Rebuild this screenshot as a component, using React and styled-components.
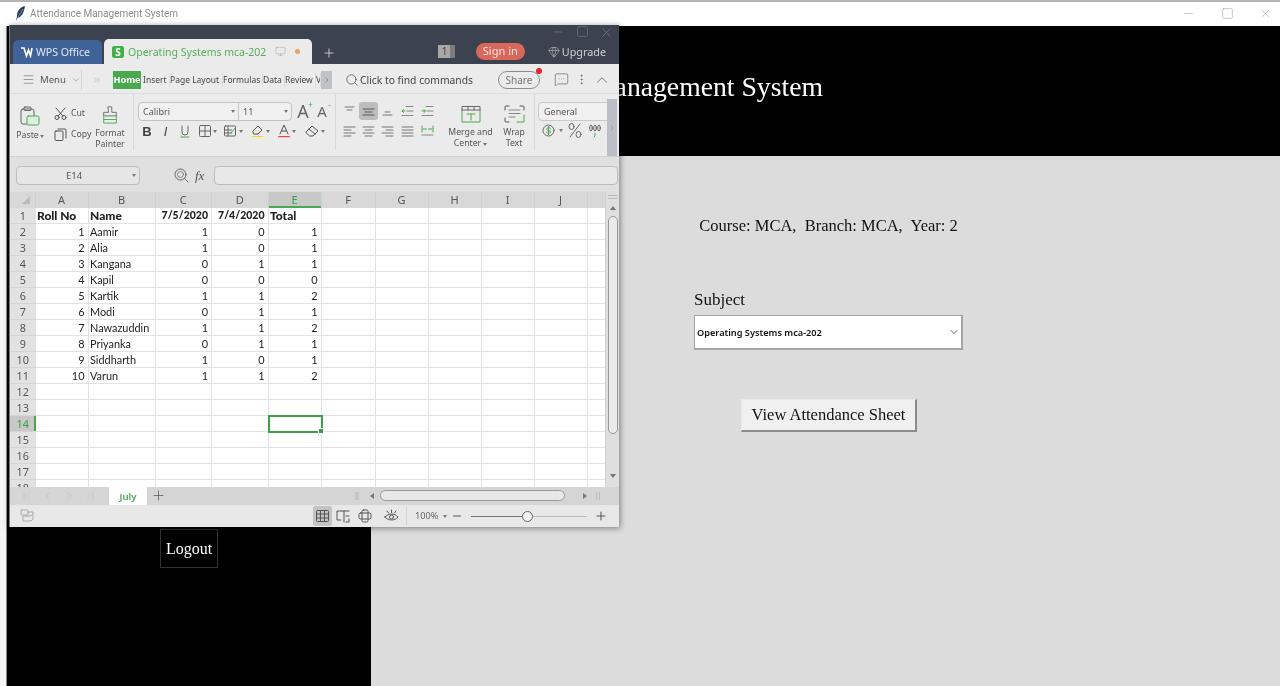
import React from "react";
import styled, { createGlobalStyle } from "styled-components";
import { Menu as MenuIcon, ChevronDown, ChevronsRight, ChevronRight, ChevronLeft, ChevronUp, Search, Plus, Minus, Monitor, Gem, MessageSquareMore, EllipsisVertical, X, Square, ChevronFirst, ChevronLast } from "lucide-react";

const UI = '"Noto Sans", "Open Sans", sans-serif';
const SERIF = '"Liberation Serif", serif';

const Global = createGlobalStyle`
  html, body { margin: 0; padding: 0; background: #fff; overflow: hidden; }
  * { box-sizing: border-box; }
`;

const Frame = styled.div`
  position: relative; width: 1280px; height: 686px; overflow: hidden;
  display: flex; flex-direction: column; background: #f6f6f6; filter: blur(0.35px);
`;
const TitleBar = styled.div`
  height: 26px; flex: none; display: flex; align-items: center; background: #fff;
  border-top: 2px solid #b5b5b5; padding: 0 8px 1px 15px;
  font: 10px Roboto, sans-serif; color: #8b8b8b;
`;
const TitleText = styled.span` margin-left: 4px; flex: 1; `;
const WinBtn = styled.span`
  width: 13px; margin-left: 25.5px; display: flex; justify-content: center; color: #9a9a9a;
`;
const Content = styled.div` flex: 1; display: flex; min-height: 0; `;
const LeftEdge = styled.div` width: 7px; flex: none; background: #f5f5f5; border-right: 1px solid #8c8c8c; `;
const Column = styled.div` flex: 1; display: flex; flex-direction: column; `;
const Header = styled.header`
  height: 130px; flex: none; background: #000; color: #fff; display: flex; align-items: center; justify-content: center;
  padding: 0 7px 8px 0; font: 27.7px ${SERIF};
`;
const Body = styled.div` flex: 1; display: flex; `;
const Sidebar = styled.nav`
  width: 364px; flex: none; background: #000; display: flex; flex-direction: column; align-items: center; padding-top: 373px;
`;
const LogoutButton = styled.button`
  width: 58px; height: 39px; padding: 0; background: #000; color: #fff; border: 1px solid #333;
  font: 16px ${SERIF};
`;
const Main = styled.main`
  flex: 1; background: #dcdcdc; padding: 59px 0 0 323px; display: flex; flex-direction: column; align-items: flex-start; color: #111;
`;
const CourseLine = styled.div` width: 269px; text-align: center; font: 16.5px/21px ${SERIF}; white-space: pre; `;
const SubjectLabel = styled.label` margin-top: 54px; font: 17px/20px ${SERIF}; `;
const SelectWrap = styled.div`
  position: relative; margin-top: 5px; width: 269px; height: 35px;
`;
const SubjectSelect = styled.select`
  appearance: none; width: 100%; height: 100%; background: #fff; border: 1px solid #a5a5a5; border-width: 1px 2px 2px 1px;
  padding: 0 0 0 2px; font: 600 9.2px ${UI}; color: #111; border-radius: 0; outline: none;
`;
const SelectChevron = styled.span`
  position: absolute; right: 3px; top: 11px; color: #666; display: flex; pointer-events: none;
`;
const ViewButton = styled.button`
  margin: 49px 0 0 47px; width: 176px; height: 33px; padding: 0; background: #f0f0f0; color: #111;
  border: 1px solid #e8e8e8; border-right: 2px solid #8c8c8c; border-bottom: 2px solid #8c8c8c; font: 16.5px ${SERIF};
`;

/* spreadsheet window */
const Wps = styled.section`
  position: absolute; left: 9px; top: 25px; width: 610px; height: 502px; display: flex; flex-direction: column;
  background: #ebebeb; box-shadow: 1px 1px 6px rgba(0,0,0,.45); border-left: 1px solid #777; overflow: hidden;
  font-family: ${UI}; color: #444;
`;
const WpsTop = styled.div`
  height: 39px; flex: none; background: #3d4250; display: flex; align-items: flex-end; padding-left: 3px; position: relative; color: #d4d4d4;
`;
const WpsControls = styled.div`
  position: absolute; right: 5px; top: 0; display: flex; gap: 10.5px; color: #7f8591;
`;
const BrandTab = styled.div`
  width: 89px; height: 24px; background: #3f6298; border-radius: 5px 5px 0 0; color: #dfe6f0; font-size: 10.6px;
  display: flex; align-items: center; justify-content: center; gap: 3px; padding-right: 5px;
`;
const DocTab = styled.div`
  margin-left: 2px; width: 208px; height: 25px; background: #ebebeb; border-radius: 5px 5px 0 0; display: flex; align-items: center; padding-left: 8px;
  color: #55b05b; font-size: 10.5px;
`;
const DocIcon = styled.span`
  width: 12px; height: 12px; background: #44b04c; border-radius: 2px; color: #fff; font: bold 10px/12px ${UI}; text-align: center; margin-right: 4px; flex: none;
`;
const DocName = styled.span` width: 147px; white-space: nowrap; `;
const Dot = styled.span` width: 5px; height: 5px; border-radius: 50%; background: #e9a05a; margin-left: 9px; `;
const AddTab = styled.span` margin: 0 0 4px 10px; display: flex; color: #ccc; `;
const TopRight = styled.div`
  margin-left: auto; padding-right: 13px; height: 39px; display: flex; align-items: center; padding-top: 14px;
`;
const CountBox = styled.span`
  width: 17px; height: 13px; background: linear-gradient(90deg,#a8a8a8 70%,#7d7d7d 70%); color: #444; font-size: 10px; line-height: 13px; padding-left: 4px;
`;
const SignIn = styled.span`
  margin-left: 21px; width: 49px; height: 17px; border-radius: 9px; background: #d9675b; color: #f6e6e2; font-size: 11px; line-height: 16px; text-align: center;
`;
const Upgrade = styled.span`
  margin-left: 23px; display: flex; align-items: center; gap: 2px; font-size: 10.8px; color: #cfcfcf;
`;

const CmdRow = styled.div`
  height: 30px; flex: none; display: flex; align-items: center; border-bottom: 1px solid #dedede; padding: 2px 0 0 12px; font-size: 8.5px; color: #444;
`;
const MenuBtn = styled.span`
  display: flex; align-items: center; gap: 5px; width: 60px; height: 20px; border-right: 1px solid #d5d5d5; color: #555; font-size: 9.6px; flex: none;
`;
const More = styled.span` display: flex; margin: 0 11px 0 10px; color: #888; flex: none; `;
const HomeTab = styled.span`
  width: 28px; height: 18px; background: #4aa94f; color: #fff; font-weight: 700; font-size: 9.2px; line-height: 18px; text-align: center; margin-right: 2px; flex: none;
`;
const NavTab = styled.span`
  width: ${p => p.$w}px; flex: none; line-height: 14px; border-right: 1px solid #dadada; white-space: nowrap; overflow: hidden;
`;
const TabScroll = styled.span`
  width: 11px; height: 18px; background: #bfc2c9; color: #777; display: flex; align-items: center; justify-content: center; flex: none;
`;
const FindBox = styled.span`
  margin-left: 13px; display: flex; align-items: center; gap: 1px; font-size: 10.3px; color: #444; width: 140px; white-space: nowrap; flex: none;
`;
const SharePill = styled.span`
  position: relative; margin-left: 13px; width: 42px; height: 18px; border: 1px solid #8d8d8d; border-radius: 9px; text-align: center; font-size: 10px; line-height: 16px; color: #777; flex: none;
  &::after { content: ""; position: absolute; right: -3px; top: -4px; width: 6px; height: 6px; border-radius: 50%; background: #e8202a; }
`;
const CmdIcon = styled.span` display: flex; margin-left: ${p => p.$ml}px; color: #555; flex: none; `;

const Ribbon = styled.div`
  height: 63px; flex: none; display: flex; border-bottom: 1px solid #d2d2d2; font-size: 8.7px; color: #555; overflow: hidden;
`;
const Group = styled.div`
  width: ${p => p.$w}px; flex: none; display: flex; ${p => p.$sep && "border-right: 1px solid #d8d8d8;"}
  margin-bottom: 6px; padding-left: ${p => p.$pl || 0}px;
`;
const TallBtn = styled.div`
  width: ${p => p.$w}px; flex: none; display: flex; flex-direction: column; align-items: center; padding-top: ${p => p.$pt || 11}px; line-height: 11px; text-align: center;
`;
const TallLabel = styled.span` margin-top: ${p => p.$mt || 3}px; white-space: nowrap; `;
const SmallStack = styled.div`
  width: 38px; margin-left: 11px; flex: none; display: flex; flex-direction: column; gap: 9px; padding-top: 13px;
`;
const SmallBtn = styled.span` display: flex; align-items: center; gap: 4px; height: 12px; `;
const ToolStack = styled.div` display: flex; flex-direction: column; padding-top: 8px; `;
const Combo = styled.div`
  width: 154px; height: 19px; border: 1px solid #c2c2c2; border-radius: 4px; background: #f0f0f0; display: flex; font-size: 9px; color: #555;
`;
const ComboPart = styled.span`
  width: ${p => p.$w}px; display: flex; align-items: center; justify-content: space-between; padding: 0 3px 0 4px; ${p => p.$sep && "border-right: 1px solid #c6c6c6;"}
`;
const Caret = styled.span`
  display: inline-block; width: 0; height: 0; border: 2.5px solid transparent; border-top: 3px solid #777; border-bottom: 0; margin-left: ${p => p.$ml || 0}px; flex: none;
`;
const ToolRow = styled.div` display: flex; margin-top: ${p => p.$mt || 0}px; height: ${p => p.$h || 18}px; `;
const ToolCell = styled.span`
  width: ${p => p.$w}px; height: 100%; flex: none; display: flex; align-items: center; justify-content: center; color: #666;
  ${p => p.$on && "background: #bdbdbd; border-radius: 3px;"}
`;
const BoldGlyph = styled.span`
  font: ${p => p.$i ? "italic 400" : "700"} 13px "Liberation Sans", sans-serif; color: #444;
`;
const FontA = styled.span`
  position: relative; font: ${p => p.$s}px/15px ${UI}; color: #666;
  &::after { content: "${p => p.$mark}"; position: absolute; right: -4px; top: -3px; font-size: 8px; line-height: 8px; color: #4aa94f; }
`;
const GeneralBox = styled.div`
  width: 75px; height: 19px; margin-left: 3px; border: 1px solid #c9c9c9; border-radius: 4px; background: #f0f0f0; font-size: 9px; line-height: 17px; padding-left: 5px;
`;
const NumRow = styled.div` display: flex; align-items: center; margin: 2px 0 0 3px; `;
const RibbonEdge = styled.div`
  margin: 5px 0 0 -1px; width: 10px; flex: none; background: #bbbec6; color: #888; display: flex; align-items: center; justify-content: center;
`;

const FormulaBar = styled.div`
  height: 35px; flex: none; background: #e0e0e0; display: flex; align-items: center; padding: 2px 0 0 6px;
`;
const NameBox = styled.div`
  width: 124px; height: 19px; background: #e6e6e6; border: 1px solid #bdbdbd; border-radius: 4px; display: flex; align-items: center; font-size: 9.5px; color: #555; padding: 0 3px 0 0;
`;
const NameText = styled.span` flex: 1; text-align: center; padding-right: 1px; `;
const FxIcons = styled.div` margin-left: 34px; display: flex; align-items: center; width: 40px; gap: 6px; color: #666; flex: none; `;
const FxGlyph = styled.span` font: italic 13px "Liberation Serif", serif; color: #555; `;
const FormulaInput = styled.div`
  width: 404px; height: 19px; background: #e8e8e8; border: 1px solid #bdbdbd; border-radius: 4px;
`;

const SheetArea = styled.div` flex: 1; min-height: 0; display: flex; background: #e0e0e0; `;
const GridWrap = styled.div` width: 595px; flex: none; display: flex; flex-direction: column; overflow: hidden; `;
const Grid = styled.div`
  display: grid; grid-template-columns: 25.5px 53px 67px 56.5px 56.5px 53px 54px 53px 53px 53px 53px 18.5px;
  grid-auto-rows: 16px; background: #fff; height: 295px; overflow: hidden; font: 10.9px/15px Lato, sans-serif; color: #222;
`;
const Corner = styled.div`
  background: #d8d8d8; display: flex; align-items: center; justify-content: center; border-right: 1px solid #cfcfcf;
  &::after { content: ""; width: 0; height: 0; border-left: 8px solid transparent; border-bottom: 8px solid #bbb; margin-left: 8px; }
`;
const ColHead = styled.div`
  background: ${p => p.$on ? "#c6c9c6" : "#d8d8d8"}; color: ${p => p.$on ? "#3e9a48" : "#555"}; text-align: center; font: 11px/16px ${UI};
  border-right: 1px solid #cfcfcf; ${p => p.$on ? "box-shadow: inset 0 -2px 0 #4aa94f;" : ""}
`;
const RowHead = styled.div`
  background: ${p => p.$on ? "#c6c9c6" : "#e2e2e2"}; color: #555; text-align: center; font: 10.8px/16px ${UI}; border-bottom: 1px solid #d4d4d4;
  ${p => p.$on ? "box-shadow: inset -2px 0 0 #4aa94f; color: #3e9a48;" : ""}
`;
const Cell = styled.div`
  position: relative; border-right: 1px solid #e2e2e2; border-bottom: 1px solid #e2e2e2; padding: 0 3px 0 1.5px; text-align: ${p => p.$r ? "right" : "left"};
  font-weight: ${p => p.$b ? 900 : 400}; font-size: ${p => p.$b ? (p.$r ? "10.5px" : "12px") : "10.9px"}; white-space: nowrap; overflow: visible;
  ${p => p.$sel && `
    outline: 2px solid #3f9f49; outline-offset: -1px; border: 0; z-index: 1;
    &::after { content: ""; position: absolute; right: -2px; bottom: -2px; width: 4px; height: 4px; background: #3f9f49; border: 1px solid #fff; }
  `}
`;
const VScroll = styled.div`
  flex: 1; display: flex; flex-direction: column; align-items: center; background: #dfdfdf; color: #777; border-left: 1px solid #d0d0d0;
`;
const VGrip = styled.span` width: 9px; height: 4px; margin-top: 3px; border: solid #bbb; border-width: 1px 0; flex: none; `;
const Arrow = styled.span`
  width: 0; height: 0; margin-top: ${p => p.$mt}px; flex: none; border: 3px solid transparent;
  ${p => p.$down ? "border-top: 4px solid #777; border-bottom: 0;" : "border-bottom: 4px solid #777; border-top: 0;"}
`;
const VThumb = styled.span` width: 10px; height: 218px; margin-top: 6px; background: #eaeaea; border: 1px solid #999; border-radius: 5px; flex: none; `;

const SheetTabs = styled.div`
  height: 18px; flex: none; background: #d5d5d5; display: flex; align-items: center; padding: 0 0 1px 10px; color: #bdbdbd; position: relative;
`;
const NavArrows = styled.span` display: flex; gap: 7px; width: 89px; `;
const JulyTab = styled.span`
  width: 38px; height: 18px; background: #fff; color: #46a64e; font: 600 9.6px/19px ${UI}; text-align: center; margin-bottom: -1px;
`;
const SheetAdd = styled.span` display: flex; margin-left: 4px; color: #555; `;
const HScroll = styled.div` margin-left: auto; display: flex; align-items: center; padding-right: 19px; color: #777; `;
const GripV = styled.span` width: 4px; height: 8px; background: #c5c5c5; `;
const HThumb = styled.span` width: 185px; height: 11px; background: #e8e8e8; border: 1px solid #999; border-radius: 6px; margin: 0 18px 0 6px; `;
const SideTri = styled.span`
  width: 0; height: 0; border: 3px solid transparent; margin-left: ${p => p.$ml || 0}px;
  ${p => p.$right ? "border-left: 4px solid #777; border-right: 0;" : "border-right: 4px solid #777; border-left: 0;"}
`;
const GripLine = styled.span` width: 4px; height: 8px; margin-left: 9px; border: solid #bbb; border-width: 0 1px; `;

const StatusBar = styled.div`
  height: 22px; flex: none; background: #e8e8e8; display: flex; align-items: center; padding-left: 10px; color: #777; font-size: 9.2px;
`;
const StatusGap = styled.span` flex: 1; `;
const ViewBtn = styled.span`
  width: ${p => p.$w || 22}px; height: 20px; display: flex; align-items: center; justify-content: center; color: #555;
  ${p => p.$on && "background: #c3c3c3; border-radius: 2px; width: 19px;"}
`;
const ZoomPct = styled.span`
  padding-left: 8px; border-left: 1px solid #d6d6d6; height: 18px; line-height: 18px; width: 45px; display: flex; align-items: center; gap: 5px; white-space: nowrap; color: #666;
`;
const Slider = styled.span`
  width: 116px; height: 1px; margin-left: 8px; background: linear-gradient(90deg,#777 48%,#bbb 48%); position: relative;
`;
const SliderKnob = styled.span`
  position: absolute; left: 51px; top: -5px; width: 11px; height: 11px; border-radius: 50%; background: #f2f2f2; border: 1px solid #666;
`;
const StatusIcon = styled.span` display: flex; color: #555; margin-left: ${p => p.$ml || 0}px; `;
const StatusEnd = styled.span` width: 11px; `;

const Svg = ({ w = 16, h = 16, vb, children, sw = 1, c = "currentColor" }) => (
  <svg width={w} height={h} viewBox={vb || `0 0 ${w} ${h}`} fill="none" stroke={c} strokeWidth={sw} strokeLinecap="round" strokeLinejoin="round">{children}</svg>
);

const G = "#4aa94f";
const Quill = () => (
  <svg width="11" height="16" viewBox="0 0 11 16"><path d="M10 0C5 1 2 5 2 10l-1 5 1.5-3C7 11 9 6 10 0Z" fill="#2d3d57" /><path d="M8 3 2.5 12" stroke="#6c8fc0" strokeWidth="1" /></svg>
);
const WpsW = () => (
  <svg width="13" height="11" viewBox="0 0 13 11" fill="none" stroke="#fff" strokeWidth="1.6"><path d="M1 1h3l2.5 8L8.5 3 10.5 9 12 1" /></svg>
);
const PasteIcon = () => (
  <Svg w={20} h={20}><rect x="1" y="3" width="13" height="15" rx="2" stroke="#666" /><rect x="4" y="1" width="7" height="3.5" rx="1" stroke="#666" /><rect x="7" y="10" width="12" height="9" rx="1.5" fill="#ddeee0" stroke={G} /></Svg>
);
const ScissorsIcon = () => (
  <Svg w={13} h={13}><circle cx="3" cy="10.5" r="2" /><circle cx="10" cy="10.5" r="2" /><path d="M4.2 9 11 1M8.8 9 2 1" /></Svg>
);
const CopyIcon = () => (
  <Svg w={13} h={13}><rect x="1" y="3" width="8" height="9.5" rx="1" /><path d="M4 1h7a1 1 0 0 1 1 1v8" /></Svg>
);
const BrushIcon = () => (
  <Svg w={18} h={20}><path d="M7 1h4v6h5v4H2V7h5Z" stroke="#666" /><path d="M2 11v8h14v-8" stroke={G} /><path d="M2 15h14" stroke={G} /></Svg>
);
const UnderIcon = () => (
  <Svg w={10} h={14}><path d="M2 2v6a3 3 0 0 0 6 0V2" stroke="#666" /><path d="M1 13h8" stroke={G} /></Svg>
);
const BorderIcon = () => (
  <Svg w={12} h={12}><rect x=".5" y=".5" width="11" height="11" rx="1" /><path d="M6 .5v11M.5 6h11" /></Svg>
);
const CondIcon = () => (
  <Svg w={13} h={12}><rect x=".5" y="1" width="11" height="10" rx="1" /><path d="M.5 5h7M.5 8h7M4 1v10" /><path d="M7 8l5-6" stroke={G} sw={1.4} /></Svg>
);
const FillIcon = () => (
  <Svg w={13} h={14}><path d="M2 7 7 2l4 4-4 4H3Z" stroke="#555" /><path d="M1 12.5h11" stroke="#eedc1e" sw={2.4} /></Svg>
);
const ColorA = () => (
  <Svg w={12} h={14}><path d="M2 10 6 1l4 9M3.5 7h5" stroke="#555" /><path d="M.5 12.7h11" stroke="#e3202a" sw={1.8} /></Svg>
);
const Eraser = () => (
  <Svg w={14} h={12}><path d="M1 7 7 1l6 5-5 5H5Z" stroke="#555" /><path d="M4 4l6 5" stroke="#555" /></Svg>
);
const Lines = ({ rows, c = "#777" }) => (
  <Svg w={13} h={12} c={c}>{rows.map(([x1, x2, y], i) => <path key={i} d={`M${x1} ${y}H${x2}`} />)}</Svg>
);
const Indent = ({ flip }) => (
  <Svg w={13} h={12}><path d="M5 1.5h7M6 6h6M1 10.5h11" stroke="#888" /><path d={flip ? "M1 6h3M3 4.5 4.5 6 3 7.5" : "M4 6H1M2.5 4.5 1 6l1.5 1.5"} stroke={G} /></Svg>
);
const Distrib = () => (
  <Svg w={13} h={12}><path d="M1 1v6M12 1v6M2 4h3.5M7.5 4H11" stroke={G} /><path d="M1 10h11" stroke="#888" /></Svg>
);
const MergeIcon = () => (
  <Svg w={20} h={18}><path d="M1 5V1.5h18V5" stroke="#666" /><path d="M1 5h18M7 1.5V5M13 1.5V5" stroke="#666" /><path d="M1 5v12h18V5" stroke={G} /><path d="M6 9h8M10 9v6" stroke={G} /></Svg>
);
const WrapIcon = () => (
  <Svg w={21} h={18}><path d="M1 5V2a1 1 0 0 1 1-1h3M16 1h3a1 1 0 0 1 1 1v3M1 13v3a1 1 0 0 0 1 1h3" stroke="#555" sw={1.2} /><path d="M5 5h11M5 8.5h11M5 12h6" stroke="#888" /><path d="M20 10v7h-7" stroke={G} sw={1.3} /></Svg>
);
const Dollar = () => (
  <Svg w={13} h={13}><circle cx="6.5" cy="6.5" r="5.5" stroke="#666" /><path d="M8.5 4.5C7.5 3 4.5 3.5 4.7 5.2 5 7 8.5 6 8.4 8c-.1 1.6-3.2 1.8-4.1.3M6.5 2.5v8" stroke={G} /></Svg>
);
const Percent = () => (
  <Svg w={14} h={15}><ellipse cx="3.5" cy="3.5" rx="2.5" ry="3" stroke="#666" /><ellipse cx="10.5" cy="11.5" rx="2.5" ry="3" stroke="#666" /><path d="M12 1 2 14" stroke="#666" /></Svg>
);
const Thousand = () => (
  <Svg w={12} h={14}><ellipse cx="2" cy="4" rx="1.3" ry="3" stroke="#666" /><ellipse cx="6" cy="4" rx="1.3" ry="3" stroke="#666" /><ellipse cx="10" cy="4" rx="1.3" ry="3" stroke="#666" /><path d="M6 9.5v2.5L5 13" stroke={G} /></Svg>
);
const FindCell = () => (
  <Svg w={15} h={15}><circle cx="6.5" cy="6.5" r="5.5" stroke="#666" /><circle cx="6.5" cy="6.5" r="3" stroke="#888" /><path d="M10.5 10.5 14 14" stroke="#666" sw={1.6} /></Svg>
);
const SheetIcon = () => (
  <Svg w={15} h={14}><rect x="1" y="1" width="7" height="5" rx=".5" stroke="#aaa" /><path d="M8 3h5v3l-3 1H3v5h8l2-2V7" stroke="#aaa" /></Svg>
);
const GridIcon = () => (
  <Svg w={13} h={12}><rect x=".5" y=".5" width="12" height="11" rx="1" stroke="#555" /><path d="M.5 4h12M.5 8h12M4.5.5v11M8.5.5v11" stroke="#555" /></Svg>
);
const PageIcon = () => (
  <Svg w={14} h={13}><path d="M13 1H1v9h4M8 1v11M10 6h3M13 9v3h-3" stroke="#555" /></Svg>
);
const BreakIcon = () => (
  <Svg w={14} h={14}><rect x="4" y="1" width="6" height="12" rx="1.5" stroke="#555" /><rect x="1" y="4" width="12" height="6" rx="1.5" stroke="#555" /></Svg>
);
const EyeIcon = () => (
  <Svg w={15} h={14}><path d="M1 8c3-4 10-4 13 0-3 4-10 4-13 0Z" stroke="#555" /><circle cx="7.5" cy="8" r="2" stroke="#555" /><path d="M3 2l1.5 2M7.5 1v2.5M12 2l-1.5 2" stroke="#555" /></Svg>
);

const columns = ["A", "B", "C", "D", "E", "F", "G", "H", "I", "J", ""];
const navTabs = [["Insert", 27], ["Page Layout", 53], ["Formulas", 40], ["Data", 22], ["Review", 31], ["V", 5]];
const data = [
  [1, "Aamir", 1, 0, 1], [2, "Alia", 1, 0, 1], [3, "Kangana", 0, 1, 1], [4, "Kapil", 0, 0, 0], [5, "Kartik", 1, 1, 2],
  [6, "Modi", 0, 1, 1], [7, "Nawazuddin", 1, 1, 2], [8, "Priyanka", 0, 1, 1], [9, "Siddharth", 1, 0, 1], [10, "Varun", 1, 1, 2],
];
const rowIds = Array.from({ length: 18 }, (_, i) => i + 1);

function SheetRow({ n }) {
  const head = n === 1 ? ["Roll No", "Name", "7/5/2020", "7/4/2020", "Total"] : null;
  const rec = n >= 2 && n <= 11 ? data[n - 2] : null;
  return (
    <>
      <RowHead $on={n === 14}>{n}</RowHead>
      {columns.map((_, c) => {
        let value = "";
        if (head && c < 5) value = head[c];
        if (rec && c < 5) value = rec[c];
        const right = head ? c === 2 || c === 3 : typeof value === "number";
        return <Cell key={c} $r={right} $b={!!head} $sel={n === 14 && c === 4}>{value}</Cell>;
      })}
    </>
  );
}

export default function App() {
  return (
    <>
      <Global />
      <Frame>
        <TitleBar>
          <Quill />
          <TitleText>Attendance Management System</TitleText>
          <WinBtn><Minus size={13} strokeWidth={1} /></WinBtn>
          <WinBtn><Square size={13} strokeWidth={1} /></WinBtn>
          <WinBtn><X size={15} strokeWidth={1} /></WinBtn>
        </TitleBar>
        <Content>
          <LeftEdge />
          <Column>
            <Header>Attendance Management System</Header>
            <Body>
              <Sidebar><LogoutButton>Logout</LogoutButton></Sidebar>
              <Main>
                <CourseLine>{"Course: MCA,  Branch: MCA,  Year: 2"}</CourseLine>
                <SubjectLabel>Subject</SubjectLabel>
                <SelectWrap>
                  <SubjectSelect defaultValue="os"><option value="os">Operating Systems mca-202</option></SubjectSelect>
                  <SelectChevron><ChevronDown size={12} /></SelectChevron>
                </SelectWrap>
                <ViewButton>View Attendance Sheet</ViewButton>
              </Main>
            </Body>
          </Column>
        </Content>

        <Wps>
          <WpsTop>
            <WpsControls>
              <Minus size={14} strokeWidth={1} /><Square size={13} strokeWidth={1} /><X size={15} strokeWidth={1} />
            </WpsControls>
            <BrandTab><WpsW />WPS Office</BrandTab>
            <DocTab>
              <DocIcon>S</DocIcon><DocName>Operating Systems mca-202</DocName>
              <Monitor size={11} strokeWidth={1} color="#999" /><Dot />
            </DocTab>
            <AddTab><Plus size={14} strokeWidth={1.6} /></AddTab>
            <TopRight>
              <CountBox>1</CountBox>
              <SignIn>Sign in</SignIn>
              <Upgrade><Gem size={12} strokeWidth={1} />Upgrade</Upgrade>
            </TopRight>
          </WpsTop>

          <CmdRow>
            <MenuBtn><MenuIcon size={13} strokeWidth={1} />Menu<ChevronDown size={10} strokeWidth={1} /></MenuBtn>
            <More><ChevronsRight size={10} strokeWidth={1} /></More>
            <HomeTab>Home</HomeTab>
            {navTabs.map(([label, w]) => <NavTab key={label} $w={w}>{label}</NavTab>)}
            <TabScroll><ChevronRight size={8} /></TabScroll>
            <FindBox><Search size={14} strokeWidth={1.2} />Click to find commands</FindBox>
            <SharePill>Share</SharePill>
            <CmdIcon $ml={14}><MessageSquareMore size={15} strokeWidth={1} /></CmdIcon>
            <CmdIcon $ml={6}><EllipsisVertical size={13} strokeWidth={1.2} /></CmdIcon>
            <CmdIcon $ml={5}><ChevronUp size={18} strokeWidth={1} /></CmdIcon>
          </CmdRow>

          <Ribbon>
            <Group $w={124} $sep $pl={7}>
              <TallBtn $w={26} $pt={12}><PasteIcon /><TallLabel $mt={4}>Paste<Caret $ml={1} /></TallLabel></TallBtn>
              <SmallStack>
                <SmallBtn><ScissorsIcon />Cut</SmallBtn>
                <SmallBtn><CopyIcon />Copy</SmallBtn>
              </SmallStack>
              <TallBtn $w={36} $pt={12}><BrushIcon /><TallLabel $mt={4}>Format<br />Painter</TallLabel></TallBtn>
            </Group>
            <Group $w={202} $sep $pl={4}>
              <ToolStack>
                <ToolRow $h={19}>
                  <Combo><ComboPart $w={100} $sep>Calibri<Caret /></ComboPart><ComboPart $w={52}>11<Caret /></ComboPart></Combo>
                  <ToolCell $w={22}><FontA $s={18} $mark="+">A</FontA></ToolCell>
                  <ToolCell $w={16}><FontA $s={15} $mark="-">A</FontA></ToolCell>
                </ToolRow>
                <ToolRow $mt={2} $h={16}>
                  <ToolCell $w={18}><BoldGlyph>B</BoldGlyph></ToolCell>
                  <ToolCell $w={19}><BoldGlyph $i>I</BoldGlyph></ToolCell>
                  <ToolCell $w={20}><UnderIcon /></ToolCell>
                  <ToolCell $w={26}><BorderIcon /><Caret $ml={2} /></ToolCell>
                  <ToolCell $w={25}><CondIcon /><Caret $ml={2} /></ToolCell>
                  <ToolCell $w={28}><FillIcon /><Caret $ml={2} /></ToolCell>
                  <ToolCell $w={26}><ColorA /><Caret $ml={2} /></ToolCell>
                  <ToolCell $w={30}><Eraser /><Caret $ml={2} /></ToolCell>
                </ToolRow>
              </ToolStack>
            </Group>
            <Group $w={110} $pl={4}>
              <ToolStack>
                <ToolRow>
                  <ToolCell $w={19}><Lines rows={[[2, 11, 2], [4, 9, 5]]} /></ToolCell>
                  <ToolCell $w={19} $on><Lines c="#555" rows={[[1, 12, 4], [3, 10, 7], [1, 12, 10]]} /></ToolCell>
                  <ToolCell $w={19}><Lines rows={[[4, 9, 7], [2, 11, 10]]} /></ToolCell>
                  <ToolCell $w={21}><Indent /></ToolCell>
                  <ToolCell $w={19}><Indent flip /></ToolCell>
                </ToolRow>
                <ToolRow $mt={2}>
                  <ToolCell $w={19}><Lines rows={[[1, 12, 2], [1, 8, 5], [1, 12, 8], [1, 8, 11]]} /></ToolCell>
                  <ToolCell $w={19}><Lines rows={[[1, 12, 2], [3, 10, 5], [1, 12, 8], [3, 10, 11]]} /></ToolCell>
                  <ToolCell $w={19}><Lines rows={[[1, 12, 2], [5, 12, 5], [1, 12, 8], [5, 12, 11]]} /></ToolCell>
                  <ToolCell $w={21}><Lines rows={[[1, 12, 2], [1, 12, 5], [1, 12, 8], [1, 12, 11]]} /></ToolCell>
                  <ToolCell $w={19}><Distrib /></ToolCell>
                </ToolRow>
              </ToolStack>
            </Group>
            <Group $w={49}>
              <TallBtn $w={49} $pt={11}><MergeIcon /><TallLabel $mt={4}>Merge and<br />Center<Caret $ml={2} /></TallLabel></TallBtn>
            </Group>
            <Group $w={40} $sep>
              <TallBtn $w={38} $pt={11}><WrapIcon /><TallLabel $mt={4}>Wrap<br />Text</TallLabel></TallBtn>
            </Group>
            <Group $w={73}>
              <ToolStack>
                <GeneralBox>General</GeneralBox>
                <NumRow>
                  <ToolCell $w={20}><Dollar /></ToolCell>
                  <ToolCell $w={6}><Caret /></ToolCell>
                  <ToolCell $w={22}><Percent /></ToolCell>
                  <ToolCell $w={18}><Thousand /></ToolCell>
                </NumRow>
              </ToolStack>
            </Group>
            <RibbonEdge><ChevronRight size={8} /></RibbonEdge>
          </Ribbon>

          <FormulaBar>
            <NameBox><NameText>E14</NameText><Caret /></NameBox>
            <FxIcons><FindCell /><FxGlyph>fx</FxGlyph></FxIcons>
            <FormulaInput />
          </FormulaBar>

          <SheetArea>
            <GridWrap>
              <Grid>
                <Corner />
                {columns.map((c, i) => <ColHead key={i} $on={c === "E"}>{c}</ColHead>)}
                {rowIds.map(n => <SheetRow key={n} n={n} />)}
              </Grid>
            </GridWrap>
            <VScroll>
              <VGrip /><Arrow $mt={7} /><VThumb /><Arrow $down $mt={40} />
            </VScroll>
          </SheetArea>

          <SheetTabs>
            <NavArrows>
              <ChevronFirst size={14} strokeWidth={1} /><ChevronLeft size={14} strokeWidth={1} /><ChevronRight size={14} strokeWidth={1} /><ChevronLast size={14} strokeWidth={1} />
            </NavArrows>
            <JulyTab>July</JulyTab>
            <SheetAdd><Plus size={15} strokeWidth={1.2} /></SheetAdd>
            <HScroll>
              <GripV /><SideTri $ml={11} /><HThumb /><SideTri $right /><GripLine />
            </HScroll>
          </SheetTabs>

          <StatusBar>
            <SheetIcon />
            <StatusGap />
            <ViewBtn $on><GridIcon /></ViewBtn>
            <ViewBtn><PageIcon /></ViewBtn>
            <ViewBtn><BreakIcon /></ViewBtn>
            <ViewBtn $w={30}><EyeIcon /></ViewBtn>
            <ZoomPct>100%<Caret /></ZoomPct>
            <StatusIcon><Minus size={12} strokeWidth={2} /></StatusIcon>
            <Slider><SliderKnob /></Slider>
            <StatusIcon $ml={7}><Plus size={14} strokeWidth={1.8} /></StatusIcon>
            <StatusEnd />
          </StatusBar>
        </Wps>
      </Frame>
    </>
  );
}
